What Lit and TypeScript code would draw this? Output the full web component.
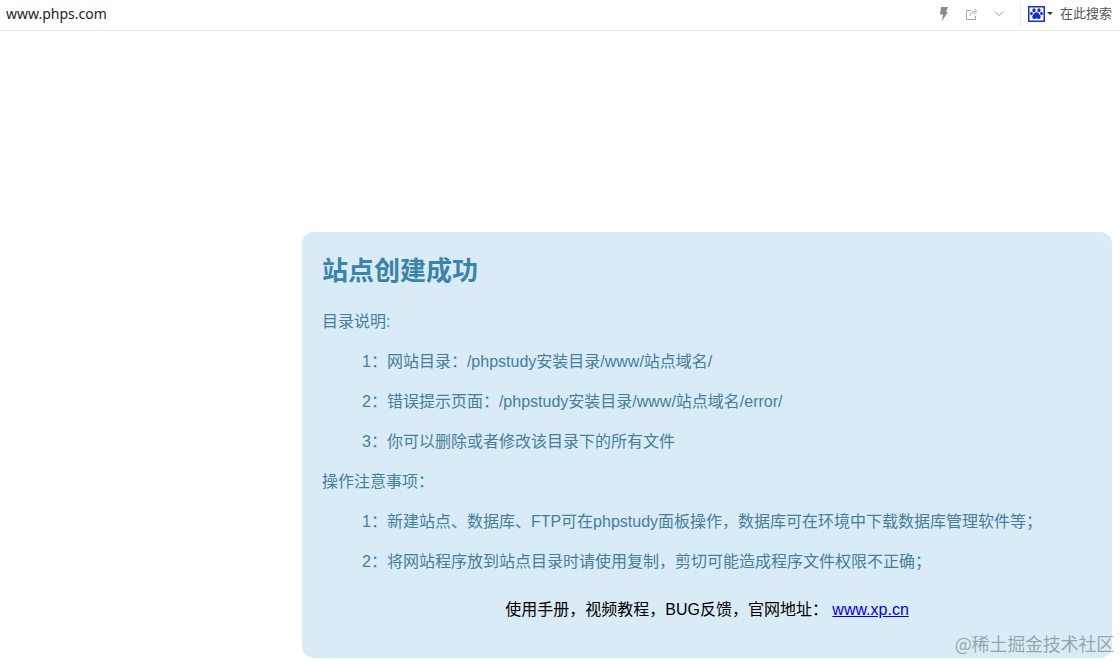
import { LitElement, html, css } from "lit";
import { customElement } from "lit/decorators.js";

@customElement("app-root")
export class AppRoot extends LitElement {
  static styles = css`
    :host { display: block; width: 1120px; height: 661px; overflow: hidden; background: #fff; position: relative; font-family: "Liberation Sans", "Noto Sans CJK SC", sans-serif; }
    .bar { height: 27px; padding: 0 8px 3px 6px; border-bottom: 1px solid #ebebeb; display: flex; align-items: center; }
    .url { font: 14px "Noto Sans", "Open Sans", sans-serif; color: #222; flex: 1; }
    .tools { display: flex; align-items: center; }
    .ic { display: block; }
    .bolt { margin-right: 18px; }
    .share { margin-right: 16px; }
    .sep { width: 1px; height: 24px; background: #ececec; margin: 0 7px 0 16px; }
    .caret { width: 0; height: 0; border-left: 3px solid transparent; border-right: 3px solid transparent; border-top: 3px solid #333; margin: 0 7px 0 2px; }
    .search { font: 13px "Noto Sans CJK SC", sans-serif; color: #555; margin-bottom: 2px; }
    .main { padding: 201px 8px 0 302px; }
    .card { height: 426px; box-sizing: border-box; background: #d9ebf7; border-radius: 12px; padding: 20px; color: #457f9c; font-size: 16px; line-height: 24px; }
    h1 { margin: 0 0 24px; font: bold 26px/34px "Noto Sans CJK SC", sans-serif; color: #3a84a9; }
    p { margin: 0 0 16px; }
    .in { padding-left: 40px; }
    .foot { margin-top: 24px; text-align: center; color: #000; }
    .foot a { color: #0000ee; }
    .mark { position: absolute; right: 6px; bottom: 5px; font: 18px "Noto Sans CJK SC", sans-serif; letter-spacing: -0.2px; color: rgba(90, 90, 90, 0.5); }
  `;

  render() {
    return html`
      <div class="bar">
        <div class="url">www.phps.com</div>
        <div class="tools">
          <svg class="ic bolt" width="9" height="14" viewBox="0 0 9 14"><path d="M2 0h7L7 5h2L3 14l1-6.500H1z" fill="#8a8a8a"/></svg>
          <svg class="ic share" width="12" height="12" viewBox="0 0 12 12" fill="none" stroke="#a8a8a8"><path d="M5 2.500H.5v9h9V8"/><path d="M4 8c0-2.500 2-4.500 5.500-4.500"/><path d="M8 .8 11 3.500 8 6.200"/></svg>
          <svg class="ic" width="10" height="5" viewBox="0 0 10 5" fill="none" stroke="#a5a5a5"><path d="M.5.500 5 4.500 9.500.500"/></svg>
          <div class="sep"></div>
          <svg class="ic" width="17" height="16" viewBox="0 0 17 16"><rect x=".75" y=".75" width="15.500" height="14.500" fill="#fff" stroke="#1230c8" stroke-width="1.500"/><g fill="#1230c8"><ellipse cx="6" cy="4.300" rx="1.600" ry="2"/><ellipse cx="11" cy="4.300" rx="1.600" ry="2"/><ellipse cx="3.500" cy="7.500" rx="1.400" ry="1.800"/><ellipse cx="13.500" cy="7.500" rx="1.400" ry="1.800"/><path d="M8.500 6.300c2.100 0 2.500 1.900 3.600 2.900 1.100 1.100.9 3.800-1.500 3.800-1 0-1.400-.4-2.100-.4s-1.100.4-2.100.4c-2.400 0-2.600-2.700-1.500-3.800C6 8.200 6.400 6.300 8.500 6.300z"/></g></svg>
          <div class="caret"></div>
          <div class="search">在此搜索</div>
        </div>
      </div>
      <div class="main">
        <div class="card">
          <h1>站点创建成功</h1>
          <p>目录说明:</p>
          <p class="in">1：网站目录：/phpstudy安装目录/www/站点域名/</p>
          <p class="in">2：错误提示页面：/phpstudy安装目录/www/站点域名/error/</p>
          <p class="in">3：你可以删除或者修改该目录下的所有文件</p>
          <p>操作注意事项：</p>
          <p class="in">1：新建站点、数据库、FTP可在phpstudy面板操作，数据库可在环境中下载数据库管理软件等；</p>
          <p class="in">2：将网站程序放到站点目录时请使用复制，剪切可能造成程序文件权限不正确；</p>
          <div class="foot">使用手册，视频教程，BUG反馈，官网地址： <a href="#">www.xp.cn</a></div>
        </div>
      </div>
      <div class="mark">@稀土掘金技术社区</div>
    `;
  }
}
